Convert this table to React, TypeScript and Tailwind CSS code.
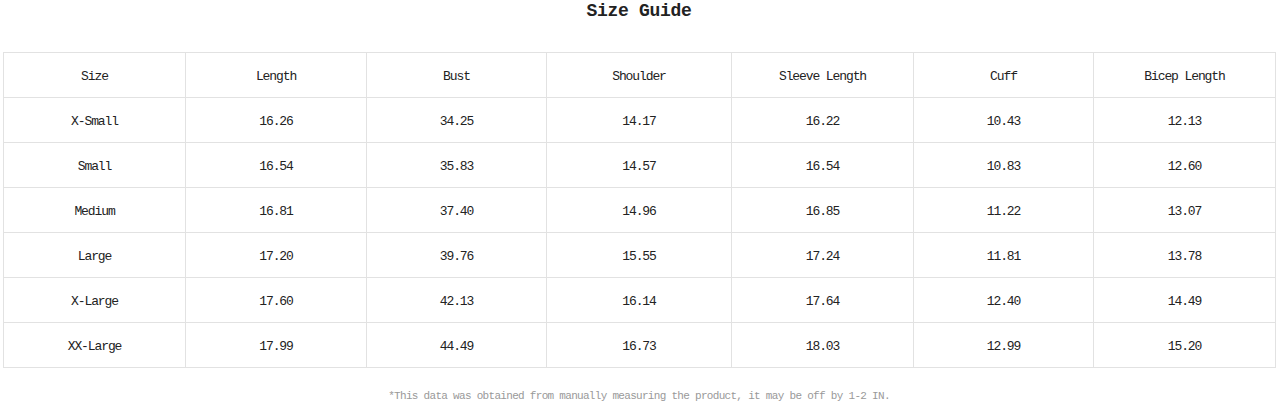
const headers = ["Size", "Length", "Bust", "Shoulder", "Sleeve Length", "Cuff", "Bicep Length"];

const widths = ["w-[182px]", "w-[181px]", "w-[180px]", "w-[185px]", "w-[182px]", "w-[180px]", "w-[182px]"];

const rows = [
  ["X-Small", "16.26", "34.25", "14.17", "16.22", "10.43", "12.13"],
  ["Small", "16.54", "35.83", "14.57", "16.54", "10.83", "12.60"],
  ["Medium", "16.81", "37.40", "14.96", "16.85", "11.22", "13.07"],
  ["Large", "17.20", "39.76", "15.55", "17.24", "11.81", "13.78"],
  ["X-Large", "17.60", "42.13", "16.14", "17.64", "12.40", "14.49"],
  ["XX-Large", "17.99", "44.49", "16.73", "18.03", "12.99", "15.20"],
];

const font = "font-['Liberation_Mono','Noto_Sans_CJK_SC',monospace]";

export default function App() {
  return (
    <div className={`w-[1278px] h-[403px] bg-white text-[#222] ${font}`}>
      <h1 className="h-[23px] text-center text-[18px] leading-[22px] font-bold tracking-[-0.3px]">
        Size Guide
      </h1>
      <div className="pt-[29px] pl-[3px] pr-[3px]">
        <table className="w-[1272px] table-fixed border-collapse text-[13px] tracking-[-1.1px]">
          <colgroup>
            {widths.map((w, i) => (
              <col key={i} className={w} />
            ))}
          </colgroup>
          <thead>
            <tr>
              {headers.map((h) => (
                <th
                  key={h}
                  className="h-[45px] pt-[4px] border border-[#e2e2e2] text-center font-normal"
                >
                  {h}
                </th>
              ))}
            </tr>
          </thead>
          <tbody>
            {rows.map((row) => (
              <tr key={row[0]}>
                {row.map((cell, i) => (
                  <td
                    key={i}
                    className="h-[45px] pt-[4px] border border-[#e2e2e2] text-center"
                  >
                    {cell}
                  </td>
                ))}
              </tr>
            ))}
          </tbody>
        </table>
      </div>
      <p className="mt-[21px] text-center text-[11px] leading-[14px] tracking-[-0.7px] text-[#999]">
        *This data was obtained from manually measuring the product, it may be off by 1-2 IN.
      </p>
    </div>
  );
}
